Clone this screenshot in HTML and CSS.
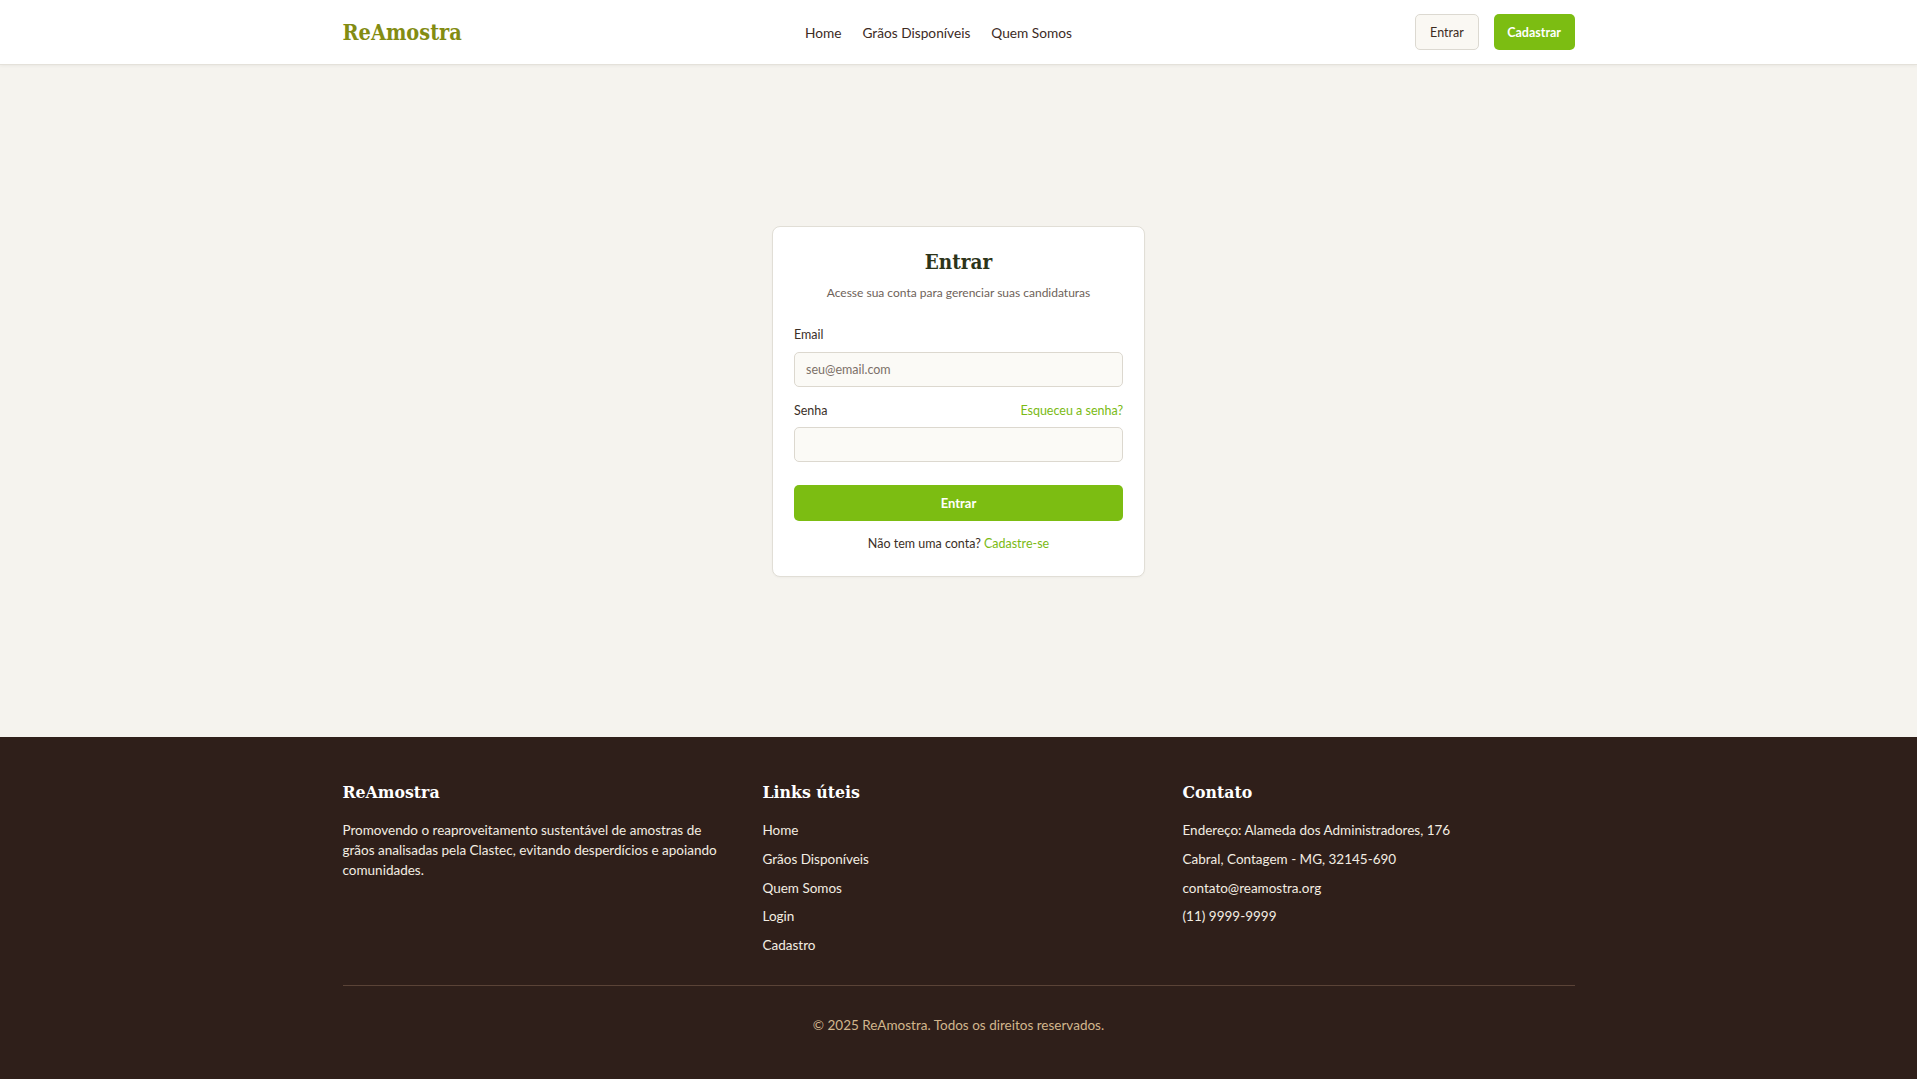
FILE: index.html
```html
<!DOCTYPE html>
<html lang="pt-BR">
<head>
<meta charset="utf-8">
<title>Entrar - ReAmostra</title>
<link rel="stylesheet" href="styles.css">
</head>
<body>
<header class="site-header">
  <div class="container header-inner">
    <a class="logo" href="#">ReAmostra</a>
    <nav class="main-nav">
      <a href="#">Home</a>
      <a href="#">Grãos Disponíveis</a>
      <a href="#">Quem Somos</a>
    </nav>
    <div class="header-actions">
      <a class="btn btn-outline" href="#">Entrar</a>
      <a class="btn btn-primary" href="#">Cadastrar</a>
    </div>
  </div>
</header>

<main class="main">
  <section class="login-card">
    <h1 class="card-title">Entrar</h1>
    <p class="card-subtitle">Acesse sua conta para gerenciar suas candidaturas</p>
    <form class="login-form">
      <div class="field">
        <label class="field-label" for="email">Email</label>
        <input class="field-input" id="email" type="email" placeholder="seu@email.com">
      </div>
      <div class="field">
        <div class="field-row">
          <label class="field-label" for="senha">Senha</label>
          <a class="link" href="#">Esqueceu a senha?</a>
        </div>
        <input class="field-input" id="senha" type="password">
      </div>
      <button class="submit-btn" type="button">Entrar</button>
    </form>
    <p class="signup-text">Não tem uma conta? <a class="link" href="#">Cadastre-se</a></p>
  </section>
</main>

<footer class="site-footer">
  <div class="container">
    <div class="footer-grid">
      <div class="footer-col">
        <h3 class="footer-title">ReAmostra</h3>
        <p class="footer-text">Promovendo o reaproveitamento sustentável de amostras de grãos analisadas pela Clastec, evitando desperdícios e apoiando comunidades.</p>
      </div>
      <div class="footer-col">
        <h3 class="footer-title">Links úteis</h3>
        <ul class="footer-list">
          <li><a href="#">Home</a></li>
          <li><a href="#">Grãos Disponíveis</a></li>
          <li><a href="#">Quem Somos</a></li>
          <li><a href="#">Login</a></li>
          <li><a href="#">Cadastro</a></li>
        </ul>
      </div>
      <div class="footer-col">
        <h3 class="footer-title">Contato</h3>
        <ul class="footer-list">
          <li>Endereço: Alameda dos Administradores, 176</li>
          <li>Cabral, Contagem - MG, 32145-690</li>
          <li>contato@reamostra.org</li>
          <li>(11) 9999-9999</li>
        </ul>
      </div>
    </div>
    <div class="footer-bottom">
      <p class="copyright">© 2025 ReAmostra. Todos os direitos reservados.</p>
    </div>
  </div>
</footer>
</body>
</html>
```

FILE: styles.css
```css
* { box-sizing: border-box; }

html, body { margin: 0; padding: 0; }

body {
  font-family: Lato, "Noto Sans", "Liberation Sans", sans-serif;
  color: #3b2f27;
  background: #f5f3ee;
  min-height: 100vh;
  display: flex;
  flex-direction: column;
}

a { text-decoration: none; color: inherit; }

.container {
  max-width: 1280px;
  margin: 0 auto;
  padding: 0 24px;
  width: 100%;
}

/* Header */
.site-header {
  background: #ffffff;
  border-bottom: 1px solid #e4e1da;
  box-shadow: 0 1px 3px rgba(0, 0, 0, 0.05);
}

.header-inner {
  height: 64px;
  display: flex;
  align-items: center;
  justify-content: space-between;
}

.logo {
  font-family: "DejaVu Serif Condensed", "DejaVu Serif", "Liberation Serif", serif;
  font-weight: 700;
  font-size: 21.5px;
  color: #838c12;
}

.main-nav {
  display: flex;
  gap: 21px;
}

.main-nav a {
  font-size: 13.7px;
  color: #3d2b1f;
}

.header-actions {
  display: flex;
  gap: 15px;
}

.btn {
  height: 36px;
  display: inline-flex;
  align-items: center;
  justify-content: center;
  padding: 0 14px;
  border-radius: 5px;
  font-size: 12.5px;
}

.btn-outline {
  background: #faf8f3;
  border: 1px solid #dcd9d1;
  color: #3d2b1f;
}

.btn-primary {
  background: #7cbd12;
  color: #ffffff;
  font-weight: 700;
  padding: 0 13.5px;
}

/* Main */
.main {
  flex: 1;
  display: flex;
  align-items: center;
  justify-content: center;
}

.login-card {
  width: 373px;
  background: #ffffff;
  border: 1px solid #e1ded6;
  border-radius: 8px;
  padding: 20px 21px 23px;
  box-shadow: 0 1px 2px rgba(0, 0, 0, 0.03);
}

.card-title {
  margin: 0;
  text-align: center;
  font-family: "DejaVu Serif Condensed", "DejaVu Serif", "Liberation Serif", serif;
  font-weight: 700;
  font-size: 20.5px;
  line-height: 30px;
  color: #2c3419;
}

.card-subtitle {
  margin: 7px 0 0;
  text-align: center;
  font-size: 12px;
  line-height: 18px;
  color: #6e6259;
}

.login-form {
  margin-top: 24px;
  display: flex;
  flex-direction: column;
}

.field { display: flex; flex-direction: column; }

.field + .field { margin-top: 15px; }

.field-row {
  display: flex;
  justify-content: space-between;
  align-items: center;
  margin-bottom: 7px;
}

.field-label {
  display: block;
  font-size: 12.5px;
  line-height: 18px;
  margin-bottom: 8px;
  color: #3b2f27;
}

.field-row .field-label { margin-bottom: 0; }

.link {
  color: #7aba14;
  font-size: 12.5px;
}

.field-input {
  height: 35px;
  width: 100%;
  border: 1px solid #dcd8cf;
  border-radius: 5px;
  background: #fbfaf6;
  padding: 0 11px;
  font-family: inherit;
  font-size: 12.5px;
  color: #3b2f27;
  outline: none;
}

.field-input::placeholder { color: #7b7068; }

.submit-btn {
  margin-top: 23px;
  height: 36px;
  border: 0;
  border-radius: 5px;
  background: #7cbd12;
  color: #ffffff;
  font-family: inherit;
  font-size: 13px;
  font-weight: 700;
}

.signup-text {
  margin: 14px 0 0;
  text-align: center;
  font-size: 12.5px;
  line-height: 18px;
  color: #3b2f27;
}

/* Footer */
.site-footer {
  background: #2f1f1a;
  color: #f3ede2;
  padding: 41px 0 44px;
}

.footer-grid {
  display: grid;
  grid-template-columns: repeat(3, 1fr);
  gap: 28px;
}

.footer-title {
  margin: 0 0 14px;
  font-family: "DejaVu Serif Condensed", "DejaVu Serif", "Liberation Serif", serif;
  font-weight: 700;
  font-size: 17.5px;
  line-height: 28px;
  color: #ffffff;
}

.footer-text {
  margin: 0;
  font-size: 13.5px;
  line-height: 20px;
  padding-right: 4px;
}

.footer-list {
  list-style: none;
  margin: 0;
  padding: 0;
  display: flex;
  flex-direction: column;
  gap: 8.7px;
  font-size: 13.5px;
  line-height: 20px;
}

.footer-bottom {
  margin-top: 30px;
  border-top: 1px solid #5a4337;
  padding-top: 29px;
}

.copyright {
  margin: 0;
  text-align: center;
  font-size: 13.5px;
  line-height: 20px;
  color: #d2b68d;
}
```
